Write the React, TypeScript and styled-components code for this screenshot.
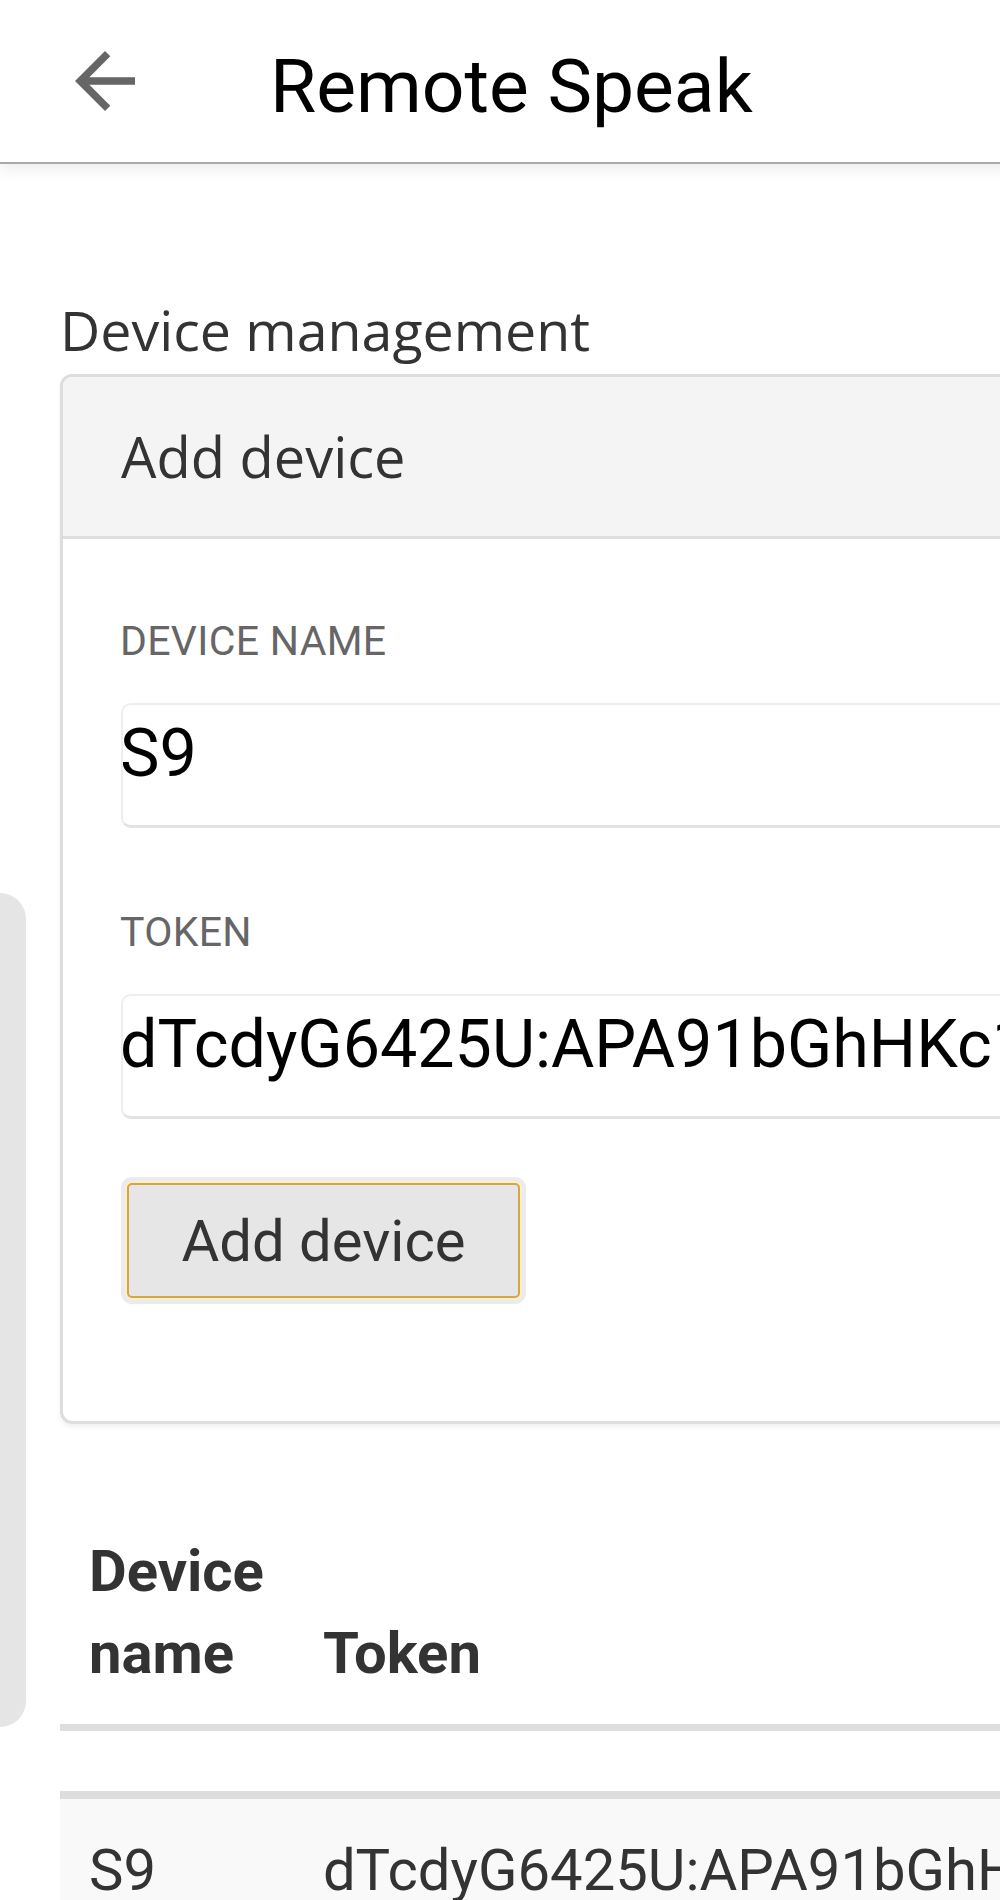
import React from 'react'
import styled, { createGlobalStyle } from 'styled-components'

const TOKEN =
  'dTcdyG6425U:APA91bGhHKc1xq9VbN0sLr7TzWmPq2eYh5kF8uDgC1oAw'

const GlobalStyle = createGlobalStyle`
  * {
    box-sizing: border-box;
  }

  html,
  body {
    margin: 0;
    padding: 0;
    overflow: hidden;
    background: #fff;
  }

  body {
    font-family: Roboto, 'Liberation Sans', sans-serif;
    color: #333;
  }
`

const Page = styled.div`
  position: relative;
  width: 1240px;
`

const AppBar = styled.header`
  position: relative;
  z-index: 1;
  display: flex;
  align-items: center;
  height: 164px;
  padding-left: 60px;
  background: #fff;
  border-bottom: 2px solid #aaa;
  box-shadow: 0 6px 14px rgba(0, 0, 0, 0.07);
`

const BackButton = styled.button`
  display: flex;
  width: 90px;
  height: 90px;
  padding: 0;
  border: none;
  background: transparent;

  svg {
    width: 90px;
    height: 90px;
    fill: #666;
  }
`

const Title = styled.h1`
  margin: 9px 0 0 120px;
  font-size: 75px;
  font-weight: 400;
  line-height: 1.2;
  color: #000;
`

const Main = styled.main`
  padding: 133px 60px 0;
`

const SectionTitle = styled.h2`
  margin: 0 0 11px;
  font-family: 'Open Sans', 'Noto Sans', sans-serif;
  font-size: 55.5px;
  font-weight: 400;
  line-height: 66px;
  color: #333;
`

const Card = styled.section`
  overflow: hidden;
  border: 3px solid #ddd;
  border-radius: 12px;
  box-shadow: 0 3px 4px rgba(0, 0, 0, 0.06);
`

const CardHeader = styled.div`
  padding: 46px 58px 47px 58px;
  background: #f4f4f4;
  border-bottom: 3px solid #ddd;
  font-family: 'Open Sans', 'Noto Sans', sans-serif;
  font-size: 56px;
  line-height: 66px;
  color: #333;
`

const CardBody = styled.div`
  padding: 78px 58px 123px;
`

const Field = styled.div`
  & + & {
    margin-top: 80px;
  }
`

const Label = styled.label`
  display: block;
  margin-bottom: 38px;
  margin-left: -1px;
  font-size: 41px;
  line-height: 48px;
  letter-spacing: 0.3px;
  text-transform: uppercase;
  color: #666;
`

const TextInput = styled.input`
  display: block;
  width: 100%;
  height: 125px;
  padding: 10px 0 35px;
  border: 2px solid #eee;
  border-bottom: 3px solid #e3e3e3;
  border-radius: 10px;
  background: #fff;
  font-family: Roboto, 'Liberation Sans', sans-serif;
  font-size: 66.4px;
  text-indent: -3px;
  color: #000;
  outline: none;
`

const SubmitButton = styled.button`
  display: block;
  width: 393px;
  height: 115px;
  margin: 64px 0 0 6px;
  padding: 0;
  border: 2.5px solid #d6a449;
  border-radius: 5px;
  background: #e6e6e6;
  box-shadow: 0 0 0 2px #fbeecb, 0 0 0 6px #ebebeb;
  font-family: Roboto, 'Liberation Sans', sans-serif;
  font-size: 58px;
  color: #333;
`

const Sliver = styled.div`
  position: absolute;
  top: 893px;
  left: 0;
  width: 26px;
  height: 834px;
  background: #e5e5e5;
  border-radius: 0 26px 26px 0;
`

const Table = styled.table`
  width: 100%;
  margin-top: 76px;
  border-collapse: separate;
  border-spacing: 0;
`

const HeadCell = styled.th`
  padding: 30px 30px 30px 29px;
  border-bottom: 7px solid #ddd;
  vertical-align: bottom;
  text-align: left;
  font-size: 58px;
  font-weight: 700;
  line-height: 82px;
  color: #333;
`

const Cell = styled.td<{ $striped?: boolean; $divider?: boolean }>`
  padding: 30px 30px 30px 29px;
  background: ${(p) => (p.$striped ? '#f9f9f9' : 'transparent')};
  border-bottom: ${(p) => (p.$divider ? '8px solid #ddd' : 'none')};
  vertical-align: top;
  font-size: 58px;
  line-height: 82px;
  color: #333;
  white-space: nowrap;
`

function ArrowBack() {
  return (
    <svg viewBox="0 0 24 24" aria-hidden="true">
      <path d="M20 11H7.83l5.59-5.59L12 4l-8 8 8 8 1.41-1.41L7.83 13H20v-2z" />
    </svg>
  )
}

const devices = [{ name: 'S9', token: TOKEN }]

export default function App() {
  return (
    <Page>
      <GlobalStyle />
      <AppBar>
        <BackButton aria-label="back">
          <ArrowBack />
        </BackButton>
        <Title>Remote Speak</Title>
      </AppBar>

      <Main>
        <SectionTitle>Device management</SectionTitle>
        <Card>
          <CardHeader>Add device</CardHeader>
          <CardBody>
            <Field>
              <Label htmlFor="device-name">Device name</Label>
              <TextInput id="device-name" value="S9" readOnly />
            </Field>
            <Field>
              <Label htmlFor="device-token">Token</Label>
              <TextInput id="device-token" value={TOKEN} readOnly />
            </Field>
            <SubmitButton type="button">Add device</SubmitButton>
          </CardBody>
        </Card>

        <Table>
          <thead>
            <tr>
              <HeadCell>Device name</HeadCell>
              <HeadCell>Token</HeadCell>
            </tr>
          </thead>
          <tbody>
            <tr>
              <Cell $divider />
              <Cell $divider />
            </tr>
            {devices.map((d) => (
              <tr key={d.token}>
                <Cell $striped>{d.name}</Cell>
                <Cell $striped>{d.token}</Cell>
              </tr>
            ))}
          </tbody>
        </Table>
      </Main>

      <Sliver />
    </Page>
  )
}
